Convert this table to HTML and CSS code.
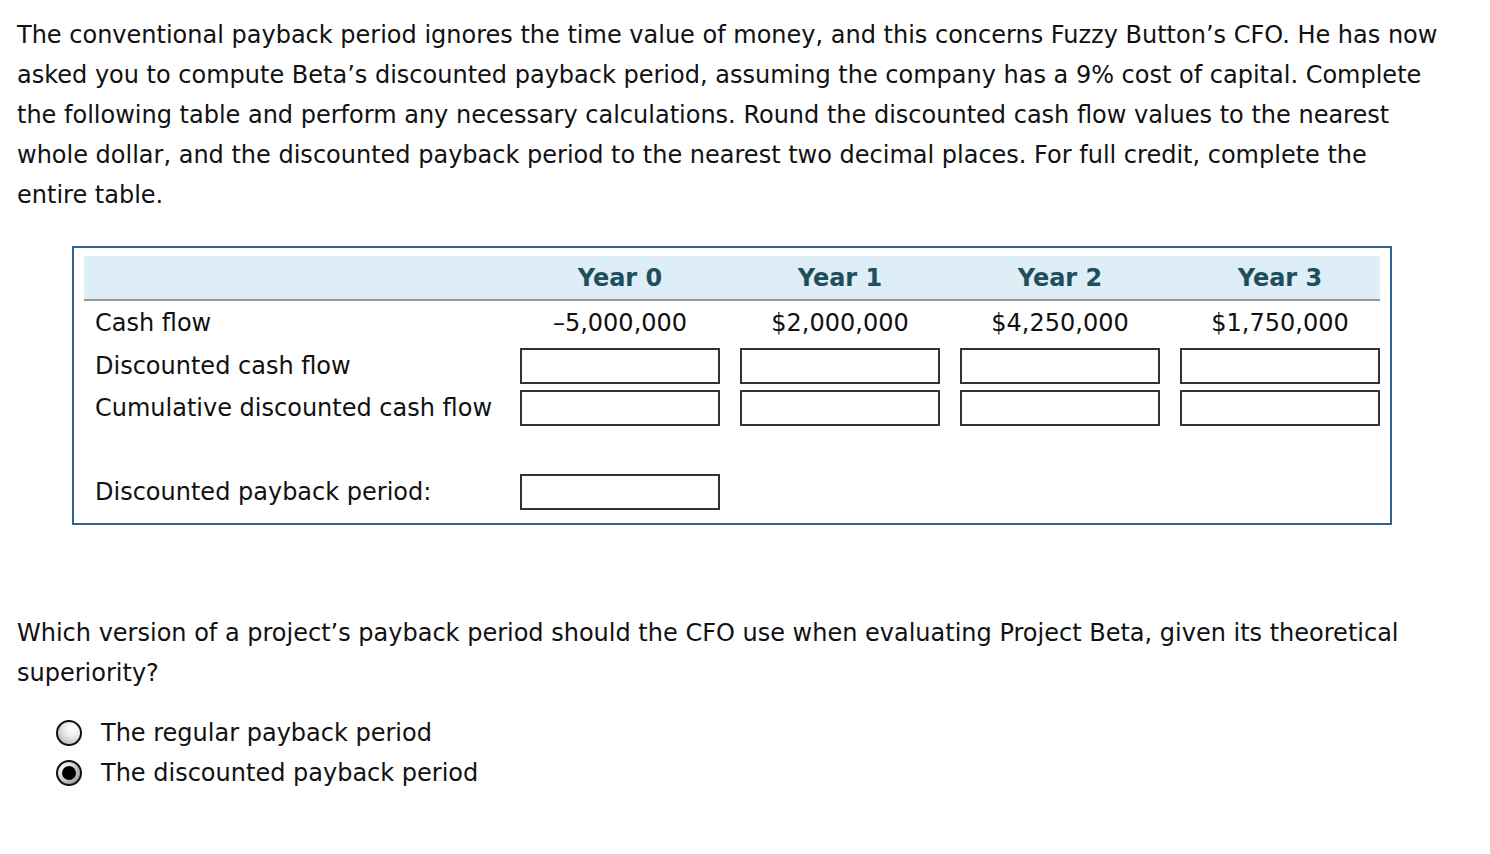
FILE: index.html
```html
<!DOCTYPE html>
<html>
<head>
<meta charset="utf-8">
<link rel="stylesheet" href="styles.css">
</head>
<body>
<div class="page">
  <p class="intro">The conventional payback period ignores the time value of money, and this concerns Fuzzy Button’s CFO. He has now asked you to compute Beta’s discounted payback period, assuming the company has a 9% cost of capital. Complete the following table and perform any necessary calculations. Round the discounted cash flow values to the nearest whole dollar, and the discounted payback period to the nearest two decimal places. For full credit, complete the entire table.</p>

  <div class="box">
    <div class="grid head">
      <div></div>
      <div class="hcell">Year 0</div>
      <div class="hcell">Year 1</div>
      <div class="hcell">Year 2</div>
      <div class="hcell">Year 3</div>
    </div>
    <div class="grid row cash">
      <div class="label">Cash flow</div>
      <div class="val">–5,000,000</div>
      <div class="val">$2,000,000</div>
      <div class="val">$4,250,000</div>
      <div class="val">$1,750,000</div>
    </div>
    <div class="grid row">
      <div class="label">Discounted cash flow</div>
      <div class="inp"></div>
      <div class="inp"></div>
      <div class="inp"></div>
      <div class="inp"></div>
    </div>
    <div class="grid row">
      <div class="label">Cumulative discounted cash flow</div>
      <div class="inp"></div>
      <div class="inp"></div>
      <div class="inp"></div>
      <div class="inp"></div>
    </div>
    <div class="grid row payback">
      <div class="label">Discounted payback period:</div>
      <div class="inp"></div>
    </div>
  </div>

  <p class="question">Which version of a project’s payback period should the CFO use when evaluating Project Beta, given its theoretical superiority?</p>

  <div class="options">
    <div class="opt"><span class="radio"></span><span>The regular payback period</span></div>
    <div class="opt"><span class="radio checked"></span><span>The discounted payback period</span></div>
  </div>
</div>
</body>
</html>
```

FILE: styles.css
```css
html, body {
  margin: 0;
  padding: 0;
  background: #ffffff;
}
.page {
  font-family: "DejaVu Sans", Verdana, sans-serif;
  font-size: 24px;
  color: #111;
  padding: 15px 17px 0 17px;
}
.intro {
  margin: 0;
  line-height: 40px;
  width: 1424px;
}
.box {
  margin: 31px 0 0 55px;
  width: 1296px;
  border: 2px solid #2d6494;
  padding: 8px 10px 13px 10px;
}
.grid {
  display: grid;
  grid-template-columns: 416px 200px 200px 200px 200px;
  column-gap: 20px;
  align-items: center;
}
.head {
  background: #ddeef6;
  height: 43px;
  border-bottom: 2px solid #999;
}
.hcell {
  text-align: center;
  font-weight: bold;
  color: #1f4f5e;
}
.row {
  margin-top: 6px;
}
.cash {
  margin-top: 0;
  height: 41px;
}
.cash > div {
  padding-top: 3px;
}
.label {
  padding-left: 11px;
  white-space: nowrap;
}
.val {
  text-align: center;
}
.inp {
  height: 32px;
  border: 2px solid #333;
  background: #fff;
}
.payback {
  margin-top: 48px;
}
.question {
  margin: 88px 0 0 0;
  line-height: 40px;
  width: 1424px;
}
.options {
  margin-top: 20px;
  padding-left: 39px;
}
.opt {
  display: flex;
  align-items: center;
  height: 40px;
  gap: 19px;
}
.radio {
  width: 22px;
  height: 22px;
  border: 2px solid #111;
  border-radius: 50%;
  background: radial-gradient(circle at 65% 30%, #ffffff 0%, #eeeeee 35%, #a9a9a9 100%);
  position: relative;
  flex: none;
}
.radio.checked {
  background: radial-gradient(circle at 30% 30%, #ffffff 0%, #cccccc 50%, #777 100%);
}
.radio.checked::after {
  content: "";
  position: absolute;
  left: 4px;
  top: 4px;
  width: 14px;
  height: 14px;
  border-radius: 50%;
  background: #000;
}
```
